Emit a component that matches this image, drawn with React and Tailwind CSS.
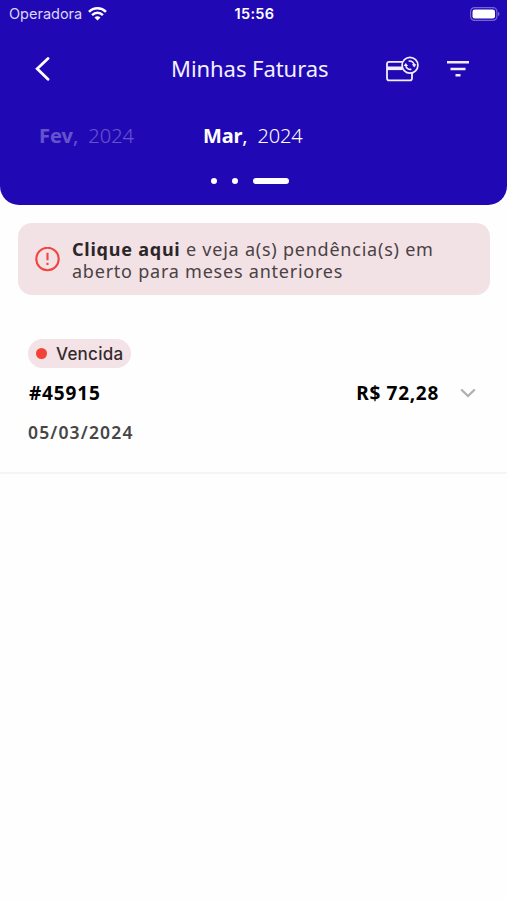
import { useState } from "react";

const months = [
  { name: "Fev", year: 2024 },
  { name: "Mar", year: 2024 },
];

const invoices = [
  { id: "#45915", status: "Vencida", amount: "R$ 72,28", dueDate: "05/03/2024" },
];

function WifiIcon() {
  return (
    <svg width="19" height="14" viewBox="0 0 19 14" fill="none" stroke="#fff" strokeWidth="2.5">
      <path d="M1 4.8C5.7.2 13.3.2 18 4.8" />
      <path d="M4.1 8.1c3.1-3 7.7-3 10.8 0" />
      <path d="M9.5 13.4 6.5 10.4c1.7-1.6 4.3-1.6 6 0Z" fill="#fff" stroke="none" />
    </svg>
  );
}

function BatteryIcon() {
  return (
    <svg width="30" height="14" viewBox="0 0 30 14" fill="none">
      <rect x="0.6" y="0.6" width="26.3" height="12.8" rx="4" stroke="#fff" strokeOpacity="0.38" strokeWidth="1.2" />
      <rect x="2.5" y="2.5" width="22.5" height="9" rx="2.3" fill="#fff" />
      <path d="M28.2 5v4c1.6-.6 1.6-3.4 0-4Z" fill="#fff" fillOpacity="0.5" />
    </svg>
  );
}

function CardSyncIcon() {
  return (
    <svg width="33" height="26" viewBox="0 0 33 26" fill="none" stroke="#f1edff" strokeWidth="1.8">
      <path d="M16.5 5.8H3.2A2.2 2.2 0 0 0 1 8v14.2a2.2 2.2 0 0 0 2.2 2.2h20.6a2.2 2.2 0 0 0 2.2-2.2V17" />
      <path d="M1 12.3h15.5" strokeWidth="3.6" />
      <circle cx="24" cy="9.2" r="7.9" strokeWidth="1.7" />
      <path d="M22.6 5.2a4.3 4.3 0 0 1 5.6 4M25.4 13.2a4.3 4.3 0 0 1-5.6-4" strokeWidth="1.6" />
      <path d="M25.9 8.3h4.6l-2.3 3.1ZM17.5 10.1h4.6l-2.3-3.1Z" fill="#f1edff" stroke="none" />
    </svg>
  );
}

// iOS style status bar
function StatusBar() {
  return (
    <div className="grid h-7 grid-cols-3 items-center pl-[9px] pr-[7px] font-['Inter',sans-serif] text-[14.5px] text-white">
      <div className="flex items-center gap-[6px]">
        <span className="text-[#dcd7f5]">Operadora</span>
        <WifiIcon />
      </div>
      <span className="text-center font-semibold tracking-[0.3px]">15:56</span>
      <div className="flex justify-end">
        <BatteryIcon />
      </div>
    </div>
  );
}

export default function App() {
  const [selected, setSelected] = useState(1);

  return (
    <div className="min-h-[900px] w-full bg-[#fefefe] font-['Noto_Sans',sans-serif]">
      <header className="h-[205px] rounded-b-[19px] bg-[#2108b5]">
        <StatusBar />

        <div className="grid h-[81px] grid-cols-[171px_156px_180px] items-center text-white">
          <button className="pl-[35px]" aria-label="Voltar">
            <svg width="15" height="24" viewBox="0 0 15 24" fill="none" stroke="#fff" strokeWidth="2.8" strokeLinecap="round">
              <path d="M13 1.5 2.2 11.7 13 22.2" />
            </svg>
          </button>
          <h1 className="whitespace-nowrap text-[22px] tracking-[-0.05px] text-[#f3f0ff]">Minhas Faturas</h1>
          <div className="flex items-center justify-end gap-7 pr-[38px]">
            <CardSyncIcon />
            <svg width="22" height="16" viewBox="0 0 22 16" fill="#f1edff">
              <path d="M0 0h22v2.6H0ZM3.5 6.7h15v2.6h-15ZM8.5 12.9h5v2.6h-5Z" />
            </svg>
          </div>
        </div>

        <div className="grid h-[54px] grid-cols-[165px_1fr] items-center pl-[38px] text-[20px] text-white">
          {months.map((month, index) => (
            <button
              key={month.name}
              onClick={() => setSelected(index)}
              className={index === selected ? "flex gap-[10px] tracking-[-0.15px]" : "flex gap-[10px] pl-px opacity-30"}
            >
              <span>
                <strong>{month.name}</strong>,
              </span>
              <span className="font-light">{month.year}</span>
            </button>
          ))}
        </div>

        {/* Page indicator */}
        <div className="flex h-9 items-center pl-[211px]">
          <span className="mr-[15px] h-[6px] w-[6px] rounded-full bg-white" />
          <span className="mr-[15px] h-[6px] w-[6px] rounded-full bg-white" />
          <span className="h-[6px] w-[36px] rounded-full bg-white" />
        </div>
      </header>

      <main>
        <button className="mx-[18px] mt-[18px] flex h-[72px] w-[472px] items-center rounded-[14px] bg-[#f2e2e5] pl-[17px] pt-px text-left">
          <svg width="25" height="25" viewBox="0 0 25 25" fill="none" stroke="#f2453d" strokeWidth="2.1">
            <circle cx="12.5" cy="12" r="11.2" />
            <path d="M12.5 5.8v7.5M12.5 15.7v2.4" />
          </svg>
          <span className="ml-3 whitespace-nowrap text-[18px] leading-[22px] tracking-[0.77px] text-[#4a4144]">
            <strong className="text-[#2c2629]">Clique aqui</strong> e veja a(s) pendência(s) em
            <br />
            aberto para meses anteriores
          </span>
        </button>

        {invoices.map((invoice) => (
          <section key={invoice.id} className="mt-[44px] h-[135px] border-b-2 border-[#f5f5f5] pl-7 pr-[31px]">
            <div className="flex h-[29px] w-[103px] items-center rounded-full bg-[#f3e2e6] pl-2 font-['Inter',sans-serif] text-[17px] font-medium tracking-[0.25px] text-[#332b2e]">
              <span className="mr-[9px] h-[11px] w-[11px] rounded-full bg-[#f44336]" />
              <span className="pt-[2px]">{invoice.status}</span>
            </div>
            <div className="mt-[10px] flex h-[30px] items-center text-[19px] font-bold text-black">
              <span className="pl-px tracking-[0.85px]">{invoice.id}</span>
              <span className="ml-auto tracking-[0.7px]">{invoice.amount}</span>
              <svg className="ml-[21px]" width="16" height="10" viewBox="0 0 16 10" fill="none" stroke="#b0b0b0" strokeWidth="2.3">
                <path d="M1.2 1.5 8 8l6.8-6.5" />
              </svg>
            </div>
            <p className="mt-[9px] text-[17.5px] font-semibold leading-[30px] tracking-[1.15px] text-[#464646]">{invoice.dueDate}</p>
          </section>
        ))}
      </main>
    </div>
  );
}
